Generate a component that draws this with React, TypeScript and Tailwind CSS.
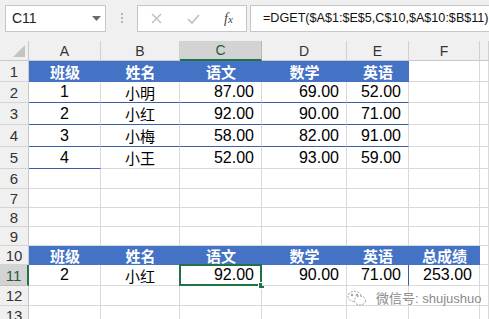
const cols = ["A", "B", "C", "D", "E", "F", ""];
const rowHeights = [21, 21, 22, 22, 22, 20, 19, 19, 19, 19, 21, 20, 20];

const cjk = "font-['Microsoft_YaHei','Noto_Sans_CJK_SC',sans-serif]";
const num = "font-['Liberation_Sans',Arial,sans-serif]";

type Cell = { text?: string; kind?: "head" | "num" | "mid" | "cn"; blue?: boolean; line?: boolean; selected?: boolean; leftLine?: boolean };

const data: Record<number, Cell[]> = {
  1: [
    { text: "班级", kind: "head", blue: true },
    { text: "姓名", kind: "head", blue: true },
    { text: "语文", kind: "head", blue: true },
    { text: "数学", kind: "head", blue: true },
    { text: "英语", kind: "head", blue: true },
  ],
  2: [
    { text: "1", kind: "mid", line: true },
    { text: "小明", kind: "cn", line: true },
    { text: "87.00", kind: "num", line: true },
    { text: "69.00", kind: "num", line: true },
    { text: "52.00", kind: "num", line: true },
  ],
  3: [
    { text: "2", kind: "mid", line: true },
    { text: "小红", kind: "cn", line: true },
    { text: "92.00", kind: "num", line: true },
    { text: "90.00", kind: "num", line: true },
    { text: "71.00", kind: "num", line: true },
  ],
  4: [
    { text: "3", kind: "mid", line: true },
    { text: "小梅", kind: "cn", line: true },
    { text: "58.00", kind: "num", line: true },
    { text: "82.00", kind: "num", line: true },
    { text: "91.00", kind: "num", line: true },
  ],
  5: [
    { text: "4", kind: "mid", line: true },
    { text: "小王", kind: "cn" },
    { text: "52.00", kind: "num" },
    { text: "93.00", kind: "num" },
    { text: "59.00", kind: "num" },
  ],
  10: [
    { text: "班级", kind: "head", blue: true },
    { text: "姓名", kind: "head", blue: true },
    { text: "语文", kind: "head", blue: true },
    { text: "数学", kind: "head", blue: true },
    { text: "英语", kind: "head", blue: true },
    { text: "总成绩", kind: "head", blue: true },
  ],
  11: [
    { text: "2", kind: "mid" },
    { text: "小红", kind: "cn" },
    { text: "92.00", kind: "num", selected: true },
    { text: "90.00", kind: "num" },
    { text: "71.00", kind: "num" },
    { text: "253.00", kind: "num", leftLine: true },
  ],
};

function GridCell({ cell }: { cell?: Cell }) {
  if (!cell) return <div className="border-r border-b border-[#d9d9d9] bg-white" />;
  const align = cell.kind === "num" ? "justify-end pr-[7px]" : "justify-center";
  const font =
    cell.kind === "head"
      ? `${cjk} text-[15px] font-bold text-white`
      : cell.kind === "cn"
        ? `${cjk} text-[15px] text-black`
        : `${num} text-[16px] text-black`;
  const box = cell.blue
    ? "bg-[#4472c4] border-b border-[#4472c4]"
    : cell.line
      ? "bg-white border-r border-b border-r-[#d9d9d9] border-b-[#3a5fa8]"
      : "bg-white border-r border-b border-[#d9d9d9]";
  return (
    <div
      className={`relative flex min-h-0 items-center overflow-visible leading-none ${align} ${font} ${box} ${
        cell.leftLine ? "border-l border-l-[#3a5fa8] -ml-px" : ""
      }`}
    >
      {cell.text}
      {cell.selected && (
        <>
          <div className="pointer-events-none absolute -left-px -top-px right-[-1px] bottom-[-1px] border-2 border-[#217346]" />
          <div className="absolute -bottom-[4px] -right-[4px] h-[7px] w-[7px] border border-white bg-[#217346]" />
        </>
      )}
    </div>
  );
}

export default function App() {
  return (
    <div className="relative h-[319px] w-[489px] overflow-hidden bg-[#f0f0f0] select-none">
      <div className="flex h-[41px] items-start pt-[5px] pl-[5px]">
        <div className="flex h-[27px] w-[101px] items-center justify-between border border-[#c6c6c6] bg-white pl-[6px] pr-[4px]">
          <span className={`${num} text-[14px] text-[#222]`}>C11</span>
          <svg width="9" height="5" viewBox="0 0 9 5">
            <path d="M0 0h9L4.5 5z" fill="#6b6b6b" />
          </svg>
        </div>
        <div className="flex w-[31px] flex-col items-center justify-center gap-[2px] pt-[8px]">
          <span className="h-[2px] w-[2px] bg-[#b5b5b5]" />
          <span className="h-[2px] w-[2px] bg-[#b5b5b5]" />
          <span className="h-[2px] w-[2px] bg-[#b5b5b5]" />
        </div>
        <div className="flex h-[27px] w-[110px] items-center border border-[#c6c6c6] bg-white">
          <svg className="ml-[13px]" width="11" height="11" viewBox="0 0 11 11">
            <path d="M1 1l9 9M10 1l-9 9" stroke="#bdbdbd" strokeWidth="1.4" />
          </svg>
          <svg className="ml-[25px]" width="13" height="10" viewBox="0 0 13 10">
            <path d="M1 5l4 4 7-8" stroke="#bdbdbd" strokeWidth="1.6" fill="none" />
          </svg>
          <span className="ml-[24px] font-['Liberation_Serif',serif] text-[14px] italic text-[#444]">
            f<span className="text-[11px]">x</span>
          </span>
        </div>
        <div className="ml-[3px] flex h-[27px] flex-1 items-center border border-[#c6c6c6] border-r-0 bg-white pl-[12px]">
          <span className={`${num} whitespace-nowrap text-[12.6px] text-[#111]`}>
            =DGET($A$1:$E$5,C$10,$A$10:$B$11)
          </span>
        </div>
      </div>

      <div className="grid grid-cols-[29px_72px_79px_82px_85px_62px_71px_1fr] grid-rows-[20px_21px_21px_22px_22px_22px_20px_19px_19px_19px_19px_21px_20px_20px]">
        <div className="relative border-r border-b border-[#c8c8c8] bg-[#f0f0f0]">
          <svg className="absolute right-[3px] bottom-[3px]" width="12" height="12" viewBox="0 0 12 12">
            <path d="M12 0v12H0z" fill="#c4c4c4" />
          </svg>
        </div>
        {cols.map((c) => (
          <div
            key={c || "G"}
            className={`flex items-center justify-center leading-none ${num} text-[14px] ${
              c === "C"
                ? "bg-[#d3d3d3] border-b-2 border-b-[#217346] text-[#1e5e3a] border-r border-r-[#b8b8b8]"
                : "bg-[#f0f0f0] border-b border-b-[#c8c8c8] text-[#333] border-r border-r-[#d0d0d0]"
            }`}
          >
            {c}
          </div>
        ))}
        {rowHeights.map((_, i) => {
          const r = i + 1;
          const cells = data[r] || [];
          const sel = r === 11;
          return [
            <div
              key={`h${r}`}
              className={`flex items-center justify-center leading-none ${num} text-[15px] border-b ${
                sel
                  ? "bg-[#d3d3d3] text-[#1e5e3a] border-b-[#c0c0c0] border-r-2 border-r-[#217346]"
                  : "bg-[#f0f0f0] text-[#333] border-b-[#d4d4d4] border-r border-r-[#c8c8c8]"
              }`}
            >
              {r}
            </div>,
            ...[0, 1, 2, 3, 4, 5, 6].map((ci) => <GridCell key={`${r}-${ci}`} cell={cells[ci]} />),
          ];
        })}
      </div>

      {/* watermark */}
      <div className="pointer-events-none absolute left-[347px] top-[290px] flex items-center gap-[9px] text-[#8a8a8a] [text-shadow:0_0_2px_#fff,0_0_2px_#fff]">
        <svg width="20" height="17" viewBox="0 0 20 17" fill="none" stroke="#9a9a9a" strokeWidth="1">
          <ellipse cx="7.5" cy="6.5" rx="6.5" ry="5.2" strokeDasharray="2 1.3" />
          <ellipse cx="13" cy="10.5" rx="5.5" ry="4.5" fill="#fff" strokeDasharray="2 1.3" />
          <circle cx="5" cy="5" r="0.8" fill="#9a9a9a" />
          <circle cx="10" cy="5" r="0.8" fill="#9a9a9a" />
        </svg>
        <span className="font-['Liberation_Sans','Noto_Sans_CJK_SC',sans-serif] text-[13px] leading-none">
          微信号: shujushuo
        </span>
      </div>
    </div>
  );
}
